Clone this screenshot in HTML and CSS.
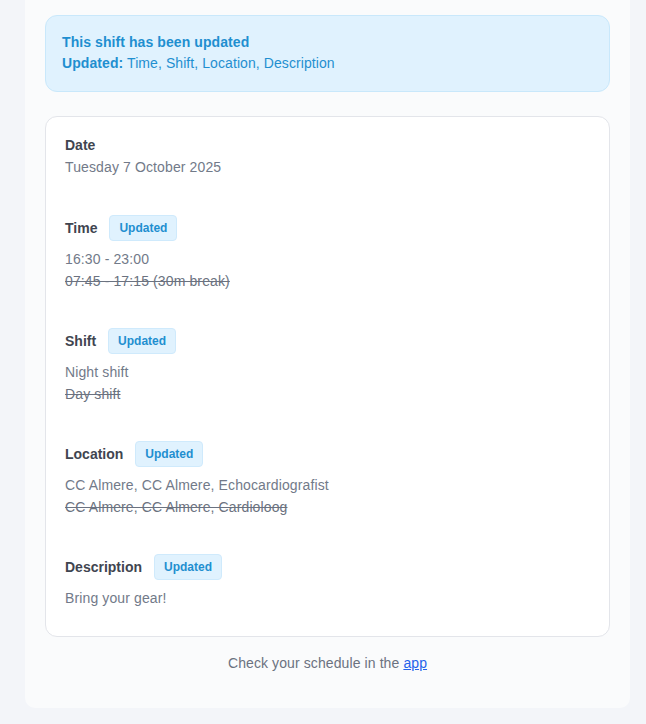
FILE: index.html
```html
<!DOCTYPE html>
<html lang="en">
<head>
<meta charset="utf-8">
<link rel="stylesheet" href="styles.css">
</head>
<body>
<div class="wrap">
  <div class="alert">
    <div class="alert-title">This shift has been updated</div>
    <div class="alert-line"><strong>Updated:</strong> Time, Shift, Location, Description</div>
  </div>
  <div class="card">
    <div class="section section-first">
      <div class="label-row"><span class="label">Date</span></div>
      <div class="value">Tuesday 7 October 2025</div>
    </div>
    <div class="section">
      <div class="label-row"><span class="label">Time</span><span class="badge">Updated</span></div>
      <div class="values">
        <div class="value">16:30 - 23:00</div>
        <div class="value old">07:45 - 17:15 (30m break)</div>
      </div>
    </div>
    <div class="section">
      <div class="label-row"><span class="label">Shift</span><span class="badge">Updated</span></div>
      <div class="values">
        <div class="value">Night shift</div>
        <div class="value old">Day shift</div>
      </div>
    </div>
    <div class="section">
      <div class="label-row"><span class="label">Location</span><span class="badge">Updated</span></div>
      <div class="values">
        <div class="value">CC Almere, CC Almere, Echocardiografist</div>
        <div class="value old">CC Almere, CC Almere, Cardioloog</div>
      </div>
    </div>
    <div class="section">
      <div class="label-row"><span class="label">Description</span><span class="badge">Updated</span></div>
      <div class="values">
        <div class="value">Bring your gear!</div>
      </div>
    </div>
  </div>
  <p class="footer">Check your schedule in the <a href="#">app</a></p>
</div>
</body>
</html>
```
FILE: styles.css
```css
* { box-sizing: border-box; }
html, body {
  margin: 0;
  padding: 0;
  background: #f3f5f9;
  font-family: "Liberation Sans", Arial, sans-serif;
  font-size: 14px;
}
.wrap {
  width: 605px;
  margin-left: 25px;
  background: #fafbfc;
  border-radius: 0 0 10px 10px;
  padding: 15px 20px 34px;
}
.alert {
  background: #e0f2fe;
  border: 1px solid #c9e8fb;
  border-radius: 12px;
  padding: 16px 16px 17px;
  color: #1f8fd0;
  line-height: 21px;
  letter-spacing: 0.08px;
}
.alert-title { font-weight: bold; }
.alert strong { font-weight: bold; }
.card {
  margin-top: 24px;
  background: #ffffff;
  border: 1px solid #e3e5ea;
  border-radius: 12px;
  padding: 17px 20px 27px 19px;
  display: flex;
  flex-direction: column;
  gap: 36px;
}
.section-first { margin-bottom: 1px; }
.label-row {
  display: flex;
  align-items: center;
  gap: 12px;
  min-height: 22px;
}
.label {
  font-weight: bold;
  color: #3f4550;
  line-height: 22px;
}
.badge {
  display: inline-block;
  background: #e0f2fe;
  border: 1px solid #cfeafc;
  border-radius: 4px;
  color: #1f8fd0;
  font-weight: bold;
  font-size: 12px;
  line-height: 24px;
  padding: 0 9px;
}
.values { margin-top: 7px; }
.value {
  color: #727a89;
  line-height: 22px;
  letter-spacing: 0.12px;
}
.old { text-decoration: line-through; color: #6b7280; }
.footer {
  margin: 15px 0 0;
  text-align: center;
  color: #6b7280;
  line-height: 22px;
  letter-spacing: 0.1px;
}
.footer a { color: #2563eb; text-decoration: underline; }
```
